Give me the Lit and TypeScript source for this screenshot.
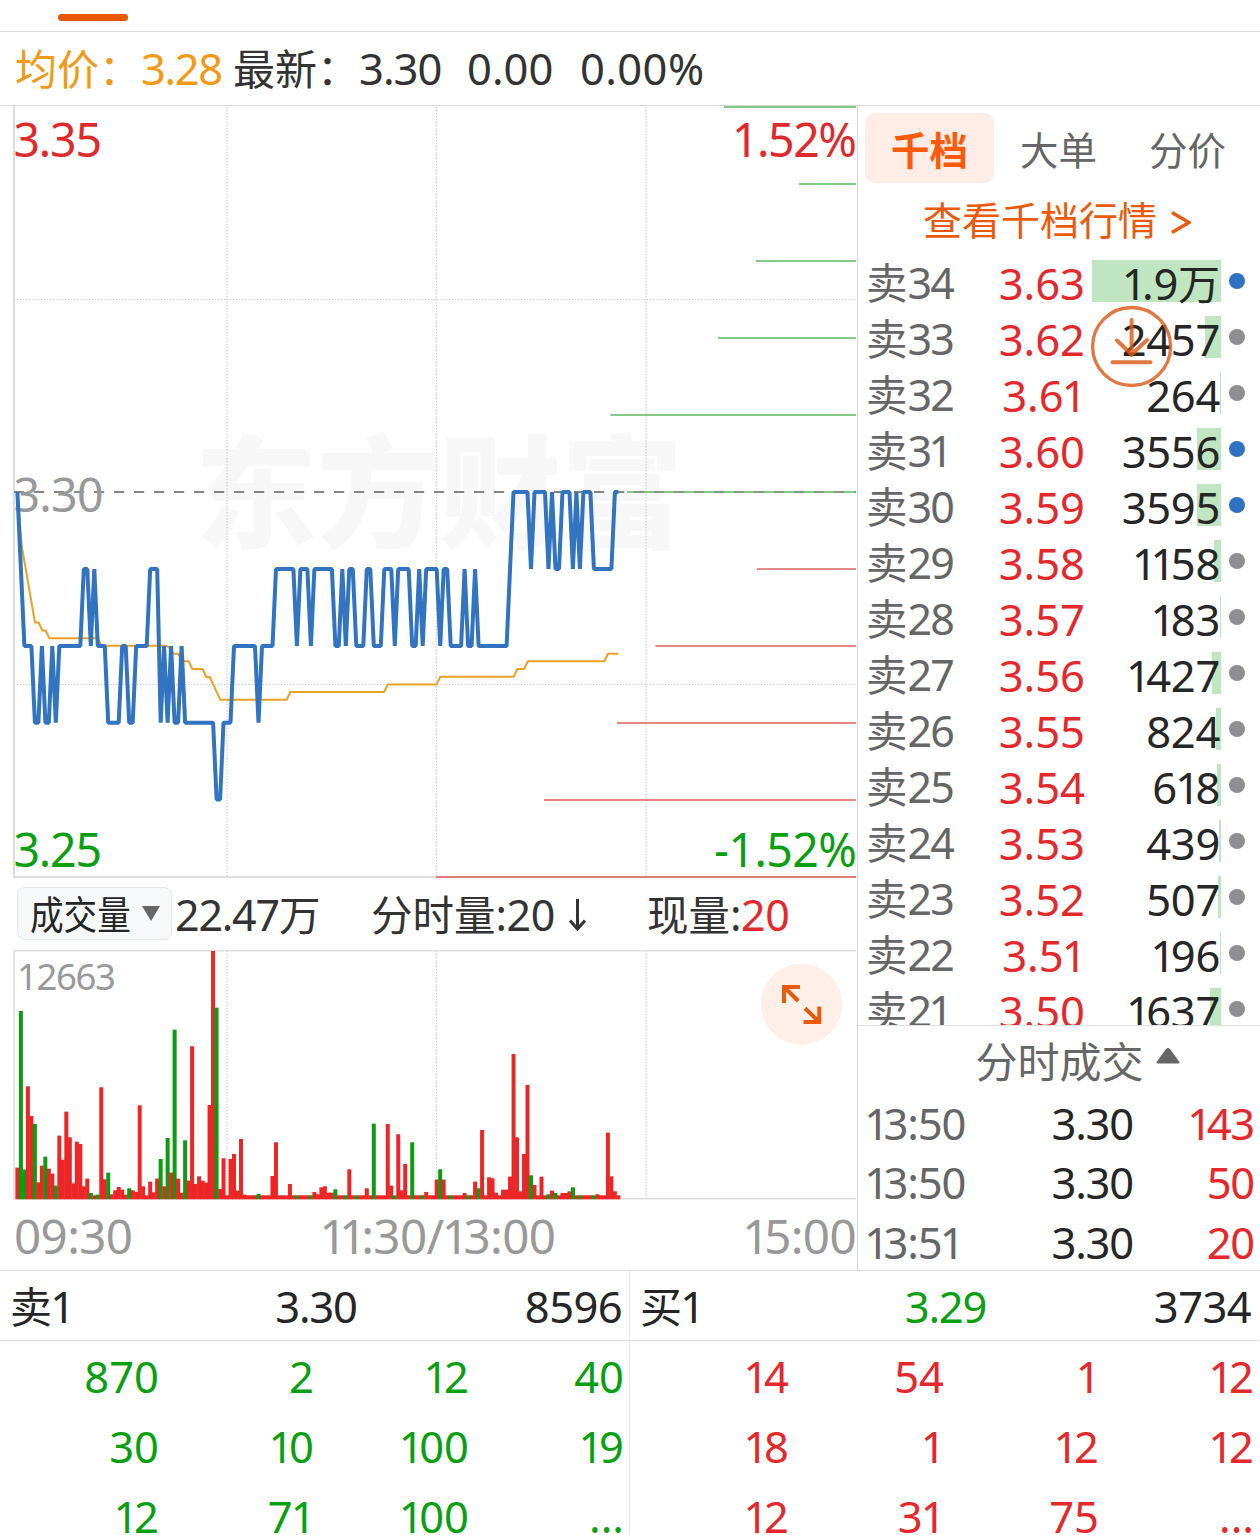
import { LitElement, html, svg, css } from "lit";
import { customElement, property } from "lit/decorators.js";

/* Splits a label so that "1" is set tight and Han characters get their own size. */
const glyphs = (text: string) =>
  (text.match(/1|[\u2e80-\u9fff\uff00-\uffef]+|[^1\u2e80-\u9fff\uff00-\uffef]+/g) ?? []).map((part, i, all) =>
    part === "1"
      ? html`<span class="one ${i === all.length - 1 ? "end" : ""}">1</span>`
      : /[\u2e80-\u9fff\uff00-\uffef]/.test(part)
        ? html`<span class="han">${part}</span>`
        : part
  );

const base = css`
  :host {
    display: block;
    box-sizing: border-box;
    font-family: "Noto Sans", "Noto Sans CJK SC", sans-serif;
    font-size: 43.5px;
    color: #262626;
    white-space: nowrap;
  }
  * { box-sizing: border-box; }
  svg { display: block; }
  .one { margin-left: -0.04em; margin-right: -0.1em; }
  .end { margin-right: -0.04em; }
  .han { font-family: "Noto Sans CJK SC", sans-serif; font-size: 0.966em; line-height: 0; letter-spacing: 0; }
  .red { color: #e5282c; }
  .green { color: #0a9f10; }
`;

const STEP = 3.494;
const X0 = 17.4;
const LEVEL = [492, 569, 646, 722.7, 799.5];

/* [minute, level] turning points of the price line */
const PRICE: number[][] = [
  [0,0],[2,2],[4,2],[5,3],[6,3],[7,2],[8,3],[9,3],[10,2],[11,3],[12,2],[18,2],[19,1],[20,1],[21,2],[22,1],[23,2],
  [25,2],[26,3],[29,3],[30,2],[31,2],[32,3],[33,3],[34,2],[37,2],[38,1],[40,1],[41,3],[42,2],[43,3],[44,2],[45,3],
  [46,3],[47,2],[48,3],[56,3],[57,4],[58,4],[59,3],[61,3],[62,2],[68,2],[69,3],[70,2],[73,2],[74,1],[79,1],[80,2],
  [81,1],[83,1],[84,2],[85,1],[90,1],[91,2],[92,2],[93,1],[94,2],[95,1],[96,1],[97,2],[99,2],[100,1],[101,1],
  [102,2],[104,2],[105,1],[107,1],[108,2],[109,1],[112,1],[113,2],[114,2],[115,1],[116,2],[117,1],[120,1],[121,2],
  [122,1],[123,1],[124,2],[127,2],[128,1],[129,2],[130,2],[131,1],[132,2],[140,2],[142,0],[146,0],[147,1],[148,0],
  [151,0],[152,1],[153,0],[154,1],[155,1],[156,0],[158,0],[159,1],[160,0],[161,1],[162,0],[164,0],[165,1],[170,1],
  [171,0],[172,0],
];

const AVERAGE =
  "17.4,492 22,548 24.7,563 35,622.6 38.7,622.6 42.3,630.5 45.7,630.5 49.3,638.2 98,638.2 101.3,645.7 166.7,645.7 " +
  "170.7,649.3 173.3,653.7 178.3,653.7 181.7,661.3 188.7,661.3 192.3,669 202.7,669 206.3,677 209.7,677 220.3,699.7 " +
  "286.7,699.7 290.3,692 384,692 388,684.4 436.7,684.4 440.3,676.8 513.7,676.8 517.3,669 524,669 528,661.3 " +
  "604.3,661.3 608,653.7 618.5,653.7";

/* one entry per minute: direction and bar height in thirds of a pixel */
const VOLUME = (
  "r95 g565 g89 r339 r250 g226 r51 r101 g128 r92 r77 g41 r191 r119 r263 r186 r48 r173 r166 r39 r62 g19 r12 g14 r336 " +
  "r60 g80 r15 r27 r37 r29 r14 g33 r27 r22 r282 r39 r12 r53 r21 r62 g121 r39 g184 r80 g509 r62 r20 g177 r56 r459 " +
  "r46 r69 r56 r50 r283 r745 g575 r31 r123 r12 r121 r136 r26 r181 r14 r12 r12 r12 g16 r12 r12 r12 r70 r171 r12 r12 " +
  "r12 r46 r12 g12 r12 r12 r12 g12 r22 r15 r36 r39 r20 r20 g30 r12 r12 g12 r90 r12 g12 r12 r12 r33 r12 g227 r12 r12 " +
  "r12 r226 r41 g12 r195 r27 r106 r12 g171 r12 r12 g12 r22 r12 r12 r59 g90 r59 r12 g12 r12 r12 r12 r19 g12 r12 r53 " +
  "g33 r208 r12 r66 r63 r20 r12 r29 r29 r68 r436 r186 r24 r136 r343 g72 r43 r12 r68 r12 g15 r26 g19 r12 r19 r19 r24 " +
  "g36 r12 g12 r12 r12 r12 g12 r15 r12 r12 r200 r69 r24 r12"
).split(" ");

/* [y, left end, side] of the resting-order lines */
const DEPTH: [number, number, string][] = [
  [107,724,"ask"],[184,799,"ask"],[261,756,"ask"],[338,718,"ask"],[415,610.5,"ask"],[492,627,"ask"],
  [569,757,"bid"],[646,655.5,"bid"],[723,617,"bid"],[800,544,"bid"],[877,436,"bid"],
];

@customElement("price-chart")
class PriceChart extends LitElement {
  static styles = [base, css`
    .dot { stroke: #cfcfcf; stroke-width: 1.2; stroke-dasharray: 1.4 1.6; }
    .edge { stroke: #dcdcdc; stroke-width: 2; }
    .dash { stroke: #858585; stroke-width: 2; stroke-dasharray: 10.2 9.8; }
    .ask { stroke: #5cb860; stroke-width: 2; opacity: 0.75; }
    .bid { stroke: #dc5a5a; stroke-width: 2; opacity: 0.72; }
    .avg { fill: none; stroke: #e9a126; stroke-width: 2; stroke-linejoin: round; }
    .price { fill: none; stroke: #3274bf; stroke-width: 4; stroke-linejoin: bevel; }
    .mark { font-family: "Noto Sans CJK SC", sans-serif; font-weight: 900; font-size: 122px; fill: #f7f7f7; }
    .lab { font-size: 46.5px; }
    .up { fill: #e0292c; }
    .down { fill: #0a9f10; }
    .flat { fill: #999; }
  `];
  render() {
    return html`<svg width="857" height="772" viewBox="0 106 857 772">
      <text class="mark" x="195" y="538">东方财富</text>
      ${[227, 436.5, 646].map((x) => svg`<line class="dot" x1=${x} x2=${x} y1="107" y2="877"/>`)}
      ${[299.5, 684.5].map((y) => svg`<line class="dot" x1="14" x2="856" y1=${y} y2=${y}/>`)}
      <path class="edge" fill="none" d="M14 106V877H856"/>
      ${DEPTH.map(([y, x, c]) => svg`<line class=${c} x1=${x} x2="856" y1=${y} y2=${y}/>`)}
      <line class="dash" x1="14" x2="627" y1="492" y2="492"/>
      <line class="dash" x1="634" x2="856" y1="492" y2="492" opacity="0.7"/>
      <text class="lab up" x="13.500" y="157" textLength="88.500">3.35</text>
      <text class="lab flat" x="13.500" y="512" textLength="90">3.30</text>
      <text class="lab down" x="13.500" y="867" textLength="88.500">3.25</text>
      <text class="lab up" x="732" y="157" textLength="125">1.52%</text>
      <text class="lab down" x="714" y="867" textLength="143">-1.52%</text>
      <polyline class="avg" points=${AVERAGE}/>
      <polyline class="price" points=${PRICE.map(([i, l]) => `${(X0 + i * STEP).toFixed(1)},${LEVEL[l]}`).join(" ")}/>
    </svg>`;
  }
}

@customElement("volume-chart")
class VolumeChart extends LitElement {
  static styles = [base, css`
    .dot { stroke: #cfcfcf; stroke-width: 1.2; stroke-dasharray: 1.4 1.6; }
    .edge { fill: none; stroke: #e0e0e0; stroke-width: 1.6; }
    .r { fill: #ec2527; }
    .g { fill: #0d9b10; }
    .max { font-size: 36.5px; fill: #999; }
    .halo { fill: #fef0e9; }
    .arrows { fill: none; stroke: #e85a0c; stroke-width: 4; }
  `];
  render() {
    return html`<svg width="857" height="250" viewBox="0 950 857 250">
      ${[227, 436.5, 646].map((x) => svg`<line class="dot" x1=${x} x2=${x} y1="951" y2="1198"/>`)}
      <path class="edge" d="M856 950.8H14V1198.8H856"/>
      ${VOLUME.map((v, i) => {
        const h = Number(v.slice(1)) / 3;
        return svg`<rect class=${v[0]} x=${(X0 - 2 + i * STEP).toFixed(2)} y=${(1199.3 - h).toFixed(2)} width="4" height=${h.toFixed(2)}/>`;
      })}
      <text class="max" x="17" y="989.5" textLength="99">12663</text>
      <circle class="halo" cx="801.5" cy="1004.3" r="40.6"/>
      <path class="arrows" d="M800 987H784V1003M784.5 987.5L798.3 1001M803.500 1022H819.300V1006.500M819 1021.700L805 1008.200"/>
    </svg>`;
  }
}

@customElement("volume-bar")
class VolumeBar extends LitElement {
  static styles = [base, css`
    :host { display: flex; align-items: center; height: 72px; padding: 2px 0 0 17px; font-size: 43px; line-height: 52px; color: #333; }
    .pill { display: flex; align-items: center; width: 155px; height: 53px; margin-top: -4px; padding-left: 12px; background: #f6f8fa; border: 1.5px solid #e4e7ea; border-radius: 8px; }
    .name { width: 101px; padding-top: 2px; font-size: 40px; color: #262626; }
    .name > span { display: inline-block; transform: scaleX(0.87); transform-origin: 0 50%; }
    .tri { margin: 1px 0 0 11px; fill: #666; }
    .total { width: 196px; margin-left: 3px; letter-spacing: -1.2px; }
    .minute { width: 276px; display: flex; align-items: center; }
    .tight { letter-spacing: -0.5px; }
    .down { margin-left: 14px; fill: none; stroke: #333; stroke-width: 3; }
  `];
  render() {
    return html`
      <div class="pill">
        <div class="name"><span>${glyphs("成交量")}</span></div>
        <svg class="tri" width="18" height="15"><path d="M0 0H18L9 15Z"/></svg>
      </div>
      <div class="total">${glyphs("22.47万")}</div>
      <div class="minute"><div class="tight">${glyphs("分时量:20")}</div><svg class="down" width="17" height="32"><path d="M8.500 0V29.500M1 21.500L8.500 30L16 21.500"/></svg></div>
      <div class="tight">${glyphs("现量:")}<span class="red">20</span></div>`;
  }
}

const ASKS: [string, string, string, number, boolean][] = [
  ["34","3.63","1.9万",19000,true],["33","3.62","2457",2457,false],["32","3.61","264",264,false],
  ["31","3.60","3556",3556,true],["30","3.59","3595",3595,true],["29","3.58","1158",1158,false],
  ["28","3.57","183",183,false],["27","3.56","1427",1427,false],["26","3.55","824",824,false],
  ["25","3.54","618",618,false],["24","3.53","439",439,false],["23","3.52","507",507,false],
  ["22","3.51","196",196,false],["21","3.50","1637",1637,false],
];

@customElement("order-book")
class OrderBook extends LitElement {
  static styles = [base, css`
    :host { height: 920px; overflow: hidden; border-bottom: 1.5px solid #e0e2e4; padding-top: 7px; }
    .tabs { display: flex; height: 70px; padding-left: 7px; font-size: 39.8px; line-height: 73px; color: #666; }
    .tab { width: 129px; text-align: center; border-radius: 10px; }
    .on { background: #feede6; color: #fa5a0a; font-weight: 700; }
    .more { display: flex; justify-content: center; gap: 14px; height: 70px; padding-right: 4px; line-height: 73px; font-size: 40.4px; color: #ea5a0c; }
    .chev { margin-top: 27px; fill: none; stroke: #ea5a0c; stroke-width: 3.5; }
    .row { display: grid; grid-template-columns: 104px 115px 136px 1fr; height: 56px; padding-left: 8px; line-height: 60px; }
    .side { color: #666; font-size: 43px; letter-spacing: -1.8px; }
    .price { text-align: right; }
    .vol { display: grid; justify-items: end; margin-left: 7px; }
    .bar { grid-area: 1 / 1; height: 42px; margin-top: 7px; background: #bfe6c0; }
    .amt { grid-area: 1 / 1; padding-right: 1px; letter-spacing: -0.3px; }
    .pin { width: 16px; height: 16px; border-radius: 50%; background: #8e8e93; margin: 20px 0 0 8px; }
    .hot { background: #2f72c4; }
  `];
  render() {
    return html`
      <div class="tabs"><div class="tab on">${glyphs("千档")}</div><div class="tab">${glyphs("大单")}</div><div class="tab">${glyphs("分价")}</div></div>
      <div class="more"><div>${glyphs("查看千档行情")}</div><svg class="chev" width="20" height="26"><path d="M1 2.500L18 12.500L1 22.500"/></svg></div>
      ${ASKS.map(([n, p, v, q, hot]) => html`<div class="row">
        <div class="side">${glyphs("卖" + n)}</div>
        <div class="price red">${glyphs(p)}</div>
        <div class="vol"><div class="bar" style="width:${Math.max(1, Math.floor((q / 19000) * 129))}px"></div><div class="amt">${glyphs(v)}</div></div>
        <div class="pin ${hot ? "hot" : ""}"></div>
      </div>`)}`;
  }
}

@customElement("trade-list")
class TradeList extends LitElement {
  static styles = [base, css`
    :host { height: 244px; }
    .title { display: flex; justify-content: center; gap: 12px; height: 67px; padding-left: 37px; line-height: 70px; color: #666; }
    .tri { margin-top: 21px; fill: #666; }
    .row { display: grid; grid-template-columns: 130px 137px 1fr; height: 59.300px; padding: 0 6px 0 8px; line-height: 61px; letter-spacing: -1.2px; }
    .time { color: #666; }
    .num { text-align: right; }
  `];
  render() {
    const rows = [["13:50","3.30","143"],["13:50","3.30","50"],["13:51","3.30","20"]];
    return html`
      <div class="title"><div>${glyphs("分时成交")}</div><svg class="tri" width="24" height="17"><path d="M12 1Q13 1 14 2L23.500 15Q24 16.500 22 16.500H2Q0 16.500 .5 15L10 2Q11 1 12 1Z"/></svg></div>
      ${rows.map(([t, p, v]) => html`<div class="row"><div class="time">${glyphs(t)}</div><div class="num">${glyphs(p)}</div><div class="num red">${glyphs(v)}</div></div>`)}`;
  }
}

@customElement("queue-half")
class QueueHalf extends LitElement {
  @property() name = "";
  @property() price = "";
  @property() total = "";
  @property() tone = "";
  @property() priceTone = "";
  @property({ attribute: false }) items: string[] = [];
  static styles = [base, css`
    :host { width: 630px; }
    .head { display: grid; grid-template-columns: 1fr 1fr 1fr; height: 70px; padding: 0 8px 0 10px; line-height: 71px; border-bottom: 1.5px solid #dcdfe0; }
    .mid { text-align: center; letter-spacing: -1.2px; }
    .end-cell { text-align: right; letter-spacing: -0.6px; }
    .grid { display: grid; grid-template-columns: repeat(4, 155px); grid-auto-rows: 70px; padding-left: 4px; line-height: 70px; text-align: right; }
  `];
  render() {
    return html`
      <div class="head"><div>${glyphs(this.name)}</div><div class="mid ${this.priceTone}">${glyphs(this.price)}</div><div class="end-cell">${glyphs(this.total)}</div></div>
      <div class="grid ${this.tone}">${this.items.map((t) => html`<div>${glyphs(t)}</div>`)}</div>`;
  }
}

@customElement("app-root")
class AppRoot extends LitElement {
  static styles = [base, css`
    :host { position: relative; width: 1260px; height: 1535px; overflow: hidden; background: #fff; }
    .strip { height: 32px; padding: 14px 0 0 57.500px; border-bottom: 1.5px solid #d8dbdc; }
    .ind { width: 70px; height: 7px; border-radius: 3.500px; background: #e85804; }
    .quote { display: flex; height: 74px; padding-left: 15px; line-height: 73px; border-bottom: 1.5px solid #d5d9da; color: #333; }
    .avg { width: 218px; color: #f09a18; letter-spacing: -1.4px; }
    .last { width: 234px; letter-spacing: -1px; }
    .chg { width: 113px; }
    .pct { letter-spacing: 0.4px; }
    .main { display: flex; height: 1165px; border-bottom: 1.5px solid #d5d9da; }
    .left { width: 857px; }
    .axis { display: flex; justify-content: space-between; padding: 0 1px 0 14px; font-size: 47.500px; line-height: 72px; color: #999; letter-spacing: -0.6px; }
    .right { width: 403px; border-left: 1.5px solid #d5d9da; }
    .queues { display: flex; height: 264px; }
    .queues queue-half + queue-half { border-left: 1.5px solid #e4e6e7; margin-left: -1px; }
    .float { position: absolute; left: 1090px; top: 305px; fill: none; stroke: #dd5a18; opacity: 0.82; }
  `];
  render() {
    return html`
      <div class="strip"><div class="ind"></div></div>
      <div class="quote">
        <div class="avg">${glyphs("均价：3.28")}</div>
        <div class="last">${glyphs("最新：3.30")}</div>
        <div class="chg">0.00</div><div class="pct">0.00%</div>
      </div>
      <div class="main">
        <div class="left">
          <price-chart></price-chart>
          <volume-bar></volume-bar>
          <volume-chart></volume-chart>
          <div class="axis"><span>09:30</span><span>${glyphs("11:30/13:00")}</span><span>${glyphs("15:00")}</span></div>
        </div>
        <div class="right"><order-book></order-book><trade-list></trade-list></div>
      </div>
      <div class="queues">
        <queue-half name="卖1" price="3.30" total="8596" tone="green" .items=${["870","2","12","40","30","10","100","19","12","71","100","..."]}></queue-half>
        <queue-half name="买1" price="3.29" total="3734" tone="red" priceTone="green" .items=${["14","54","1","12","18","1","12","12","12","31","75","..."]}></queue-half>
      </div>
      <svg class="float" width="84" height="84">
        <circle cx="41.600" cy="41.500" r="39" stroke-width="3.300"/>
        <path d="M41.600 15V50M27 35.500L41.600 49.500L57 35M22.500 57.300H60.500" stroke-width="4" stroke-linecap="round"/>
      </svg>`;
  }
}
